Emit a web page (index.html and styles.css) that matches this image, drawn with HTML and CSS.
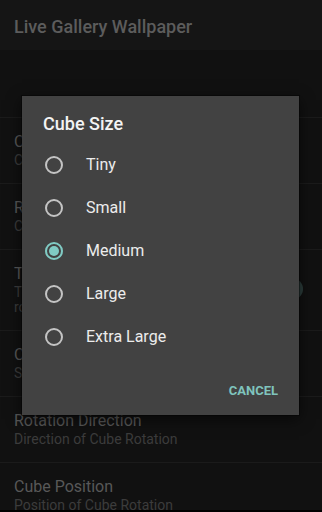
FILE: index.html
```html
<!DOCTYPE html>
<html>
<head>
<meta charset="utf-8">
<link rel="stylesheet" href="styles.css">
</head>
<body>
<div class="app">
  <header class="toolbar">
    <h1 class="toolbar-title">Live Gallery Wallpaper</h1>
  </header>
  <div class="prefs">
    <div class="pref pref-empty"></div>
    <div class="pref">
      <div class="pref-text">
        <div class="pref-title">Choose Images</div>
        <div class="pref-summary">Choose images for the cube</div>
      </div>
    </div>
    <div class="pref">
      <div class="pref-text">
        <div class="pref-title">Rotation Speed</div>
        <div class="pref-summary">Change speed of cube rotation</div>
      </div>
    </div>
    <div class="pref">
      <div class="pref-text">
        <div class="pref-title">Touch Rotation</div>
        <div class="pref-summary">Touch the screen to pause the cube<br>rotation</div>
      </div>
      <div class="switch"><span class="switch-thumb"></span></div>
    </div>
    <div class="pref">
      <div class="pref-text">
        <div class="pref-title">Cube Size</div>
        <div class="pref-summary">Size of the Cube</div>
      </div>
    </div>
    <div class="pref">
      <div class="pref-text">
        <div class="pref-title">Rotation Direction</div>
        <div class="pref-summary">Direction of Cube Rotation</div>
      </div>
    </div>
    <div class="pref">
      <div class="pref-text">
        <div class="pref-title">Cube Position</div>
        <div class="pref-summary">Position of Cube Rotation</div>
      </div>
    </div>
  </div>
  <div class="bottom-edge"></div>

  <div class="dialog">
    <div class="dialog-title">Cube Size</div>
    <div class="options">
      <div class="option"><span class="radio"></span><span class="option-label">Tiny</span></div>
      <div class="option"><span class="radio"></span><span class="option-label">Small</span></div>
      <div class="option"><span class="radio radio-checked"></span><span class="option-label">Medium</span></div>
      <div class="option"><span class="radio"></span><span class="option-label">Large</span></div>
      <div class="option"><span class="radio"></span><span class="option-label">Extra Large</span></div>
    </div>
    <div class="dialog-actions">
      <span class="btn-text">CANCEL</span>
    </div>
  </div>
</div>
</body>
</html>
```

FILE: styles.css
```css
* { box-sizing: border-box; }
html, body {
  margin: 0;
  padding: 0;
  background: #111111;
  font-family: Roboto, "Noto Sans", Arial, sans-serif;
}
.app {
  position: relative;
  width: 322px;
  height: 512px;
  overflow: hidden;
  display: flex;
  flex-direction: column;
  background: #111111;
}
.toolbar {
  height: 50px;
  flex: none;
  background: #151515;
  display: flex;
  align-items: center;
  padding: 3px 14px 0;
}
.toolbar-title {
  margin: 0;
  font-size: 18px;
  font-weight: 500;
  color: #5c5c5c;
}
.prefs {
  flex: 1;
  min-height: 0;
  overflow: hidden;
  display: flex;
  flex-direction: column;
}
.pref {
  flex: none;
  display: flex;
  align-items: flex-start;
  padding: 14px 19px 15px 14px;
  border-bottom: 1px solid #1b1b1b;
}
.pref-empty { height: 68px; }
.pref-text { flex: 1; min-width: 0; }
.pref-title {
  font-size: 16px;
  line-height: 20px;
  color: #585858;
}
.pref-summary {
  font-size: 14px;
  line-height: 15px;
  margin-top: 1px;
  color: #3c3c3c;
}
.switch {
  flex: none;
  width: 30px;
  height: 22px;
  margin-top: 14px;
  position: relative;
}
.switch-thumb {
  position: absolute;
  right: 0;
  top: 0;
  width: 22px;
  height: 22px;
  border-radius: 50%;
  background: #2c3d3b;
}
.bottom-edge {
  height: 2px;
  flex: none;
  background: #000;
}
.dialog {
  position: absolute;
  left: 22px;
  top: 96px;
  width: 277px;
  height: 319px;
  background: #424242;
  box-shadow: 0 0 0 1px rgba(0,0,0,0.35), 0 4px 14px rgba(0,0,0,0.6);
  padding: 16px 0 0;
  display: flex;
  flex-direction: column;
}
.dialog-title {
  padding-left: 21px;
  font-size: 18px;
  font-weight: 500;
  line-height: 24px;
  color: #f4f4f4;
  margin-bottom: 7px;
}
.options {
  display: flex;
  flex-direction: column;
}
.option {
  height: 43px;
  display: flex;
  align-items: center;
  padding-left: 23px;
}
.radio {
  width: 18px;
  height: 18px;
  border: 2px solid #c4c4c4;
  border-radius: 50%;
  flex: none;
  position: relative;
}
.radio-checked {
  border-color: #80cbc4;
}
.radio-checked::after {
  content: "";
  position: absolute;
  left: 2px;
  top: 2px;
  width: 10px;
  height: 10px;
  border-radius: 50%;
  background: #80cbc4;
}
.option-label {
  margin-left: 23px;
  font-size: 16px;
  color: #ececec;
}
.dialog-actions {
  margin-top: 14px;
  height: 36px;
  display: flex;
  align-items: center;
  justify-content: flex-end;
  padding-right: 21px;
}
.btn-text {
  font-size: 13px;
  font-weight: 700;
  letter-spacing: 0;
  color: #7fc4bd;
}
```
